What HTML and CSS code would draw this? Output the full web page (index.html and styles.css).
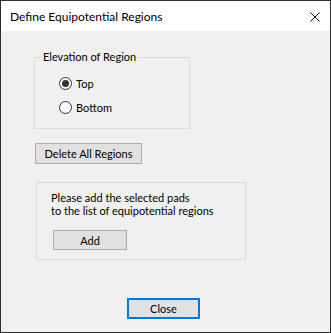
FILE: index.html
```html
<!DOCTYPE html>
<html>
  <head>
    <meta charset="UTF-8" />
    <title>Define Equipotential Regions</title>
    <link rel="stylesheet" href="styles.css">
  </head>
  <body>
    <div class="window">
      <div class="titlebar">
        <span class="title">Define Equipotential Regions</span>
        <svg class="close-x" width="10" height="10" viewBox="0 0 10 10">
          <path d="M0.5 0.5 L9.5 9.5 M9.5 0.5 L0.5 9.5" stroke="#111" stroke-width="1" fill="none" />
        </svg>
      </div>

      <div class="content">
        <fieldset class="group elevation">
          <legend>Elevation of Region</legend>
          <label class="radio"><span class="dot checked"></span>Top</label>
          <label class="radio"><span class="dot"></span>Bottom</label>
        </fieldset>

        <button class="button delete">Delete All Regions</button>

        <div class="group add-box">
          <p>Please add the selected pads<br />to the list of equipotential regions</p>
          <button class="button add">Add</button>
        </div>

        <div class="footer">
          <button class="button close">Close</button>
        </div>
      </div>
    </div>
  </body>
</html>
```

FILE: styles.css
```css
/* Dialog frame */
body {
  margin: 0;
  padding: 0;
  font-family: Lato, "Noto Sans", sans-serif;
  font-size: 11px;
  color: #000;
}
.window {
  width: 331px;
  height: 333px;
  box-sizing: border-box;
  border: 1px solid #2d2d2d;
  background-color: #f0f0f0;
  display: flex;
  flex-direction: column;
}
.titlebar {
  height: 30px;
  background-color: #fff;
  display: flex;
  align-items: center;
  justify-content: space-between;
  padding: 0 10px 0 9px;
}
.title {
  font-size: 12px;
}
.close-x {
  display: block;
  margin-top: 1px;
}

/* Body */
.content {
  flex: 1;
  display: flex;
  flex-direction: column;
  align-items: flex-start;
  padding-top: 18px;
}
.group {
  border: 1px solid #dcdcdc;
  margin: 0;
}
.elevation {
  width: 156px;
  box-sizing: border-box;
  margin-left: 33px;
  padding: 10px 0 13px 0;
  display: flex;
  flex-direction: column;
  gap: 8px;
}
.elevation legend {
  margin-left: 7px;
  padding: 0 1px;
  line-height: 16px;
}
.radio {
  display: flex;
  align-items: center;
  height: 16px;
  margin-left: 24px;
}
.dot {
  width: 11px;
  height: 11px;
  border: 1px solid #333;
  border-radius: 50%;
  background-color: #fff;
  margin-right: 4px;
  display: flex;
  align-items: center;
  justify-content: center;
}
.dot.checked::after {
  content: "";
  width: 7px;
  height: 7px;
  border-radius: 50%;
  background-color: #333;
}

/* Buttons */
.button {
  font-family: inherit;
  font-size: 11px;
  color: #000;
  background-color: #e1e1e1;
  border: 1px solid #adadad;
  box-sizing: border-box;
  height: 21px;
  padding: 0;
}
.delete {
  width: 107px;
  margin: 14px 0 0 34px;
}
.add-box {
  width: 210px;
  height: 78px;
  box-sizing: border-box;
  margin: 18px 0 0 35px;
  padding: 8px 0 0 14px;
}
.add-box p {
  margin: 0;
  line-height: 13px;
}
.add {
  width: 74px;
  height: 20px;
  margin: 13px 0 0 2px;
}
.footer {
  margin: 38px 0 0 126px;
}
.close {
  width: 73px;
  border: 2px solid #0078d7;
}
```
